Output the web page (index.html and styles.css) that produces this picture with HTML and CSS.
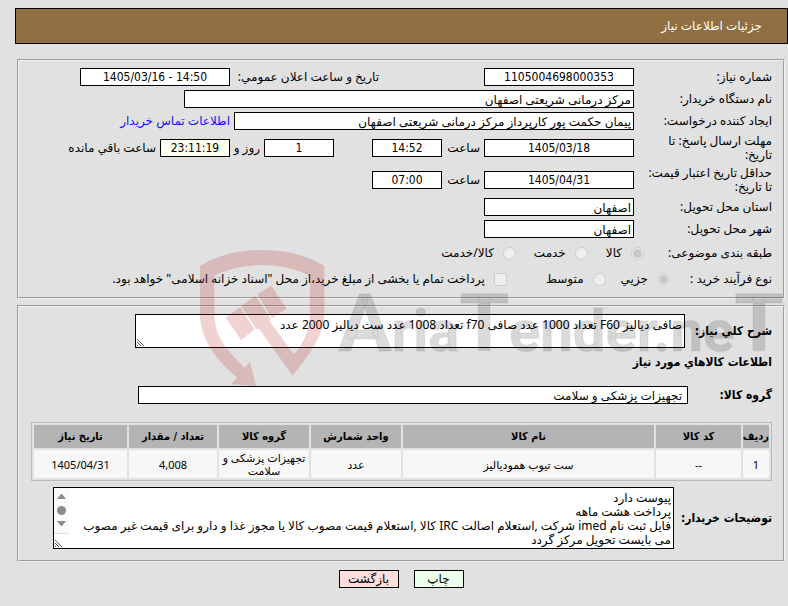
FILE: index.html
```html
<!DOCTYPE html>
<html lang="fa" dir="rtl">
<head>
    <meta charset="UTF-8">
    <meta name="viewport" content="width=device-width, initial-scale=1.0">
    <title>جزئیات اطلاعات نیاز</title>
    <link rel="stylesheet" href="styles.css">
</head>
<body>
    <header class="page-title">جزئیات اطلاعات نیاز</header>

    <main class="content">
        <form>
            <section class="panel details">
                <div class="row">
                    <label class="row-label" for="need-no">شماره نیاز:</label>
                    <input class="field medium center" id="need-no" type="text" value="1105004698000353" readonly>
                    <label class="announce-label" for="announce">تاریخ و ساعت اعلان عمومي:</label>
                    <input class="field medium center" id="announce" type="text" value="1405/03/16 - 14:50" dir="ltr" readonly>
                </div>
                <div class="row">
                    <label class="row-label" for="buyer">نام دستگاه خریدار:</label>
                    <input class="field wide" id="buyer" type="text" value="مرکز درمانی شریعتی اصفهان" readonly>
                </div>
                <div class="row">
                    <label class="row-label" for="creator">ایجاد کننده درخواست:</label>
                    <input class="field large" id="creator" type="text" value="پیمان حکمت پور کارپرداز مرکز درمانی شریعتی اصفهان" readonly>
                    <a class="contact" href="#">اطلاعات تماس خریدار</a>
                </div>
                <div class="row tall">
                    <label class="row-label" for="reply-date">مهلت ارسال پاسخ: تا<br>تاریخ:</label>
                    <input class="field medium center" id="reply-date" type="text" value="1405/03/18" readonly>
                    <label class="hour-label" for="reply-time">ساعت</label>
                    <input class="field small center" id="reply-time" type="text" value="14:52" readonly>
                    <input class="field small center days" id="days" type="text" value="1" readonly>
                    <label class="days-label" for="days">روز و</label>
                    <input class="field small center countdown" id="left" type="text" value="23:11:19" readonly>
                    <label class="left-label" for="left">ساعت باقي مانده</label>
                </div>
                <div class="row tall">
                    <label class="row-label" for="valid-date">حداقل تاریخ اعتبار قیمت:<br>تا تاریخ:</label>
                    <input class="field medium center" id="valid-date" type="text" value="1405/04/31" readonly>
                    <label class="hour-label" for="valid-time">ساعت</label>
                    <input class="field small center" id="valid-time" type="text" value="07:00" readonly>
                </div>
                <div class="row">
                    <label class="row-label" for="province">استان محل تحویل:</label>
                    <input class="field medium" id="province" type="text" value="اصفهان" readonly>
                </div>
                <div class="row">
                    <label class="row-label" for="city">شهر محل تحویل:</label>
                    <input class="field medium" id="city" type="text" value="اصفهان" readonly>
                </div>
                <div class="row options">
                    <span class="options-label">طبقه بندی موضوعی:</span>
                    <label class="option"><input type="radio" name="subject" checked disabled> کالا</label>
                    <label class="option"><input type="radio" name="subject" disabled> خدمت</label>
                    <label class="option"><input type="radio" name="subject" disabled> کالا/خدمت</label>
                </div>
                <div class="row options process">
                    <span class="options-label">نوع فرآیند خرید :</span>
                    <label class="option"><input type="radio" name="process" checked disabled> جزیي</label>
                    <label class="option"><input type="radio" name="process" disabled> متوسط</label>
                    <label class="option payment"><input type="checkbox" disabled> پرداخت تمام یا بخشی از مبلغ خرید،از محل "اسناد خزانه اسلامی" خواهد بود.</label>
                </div>
            </section>

            <section class="panel goods">
                <div class="text-row summary-row">
                    <label for="summary">شرح کلي نیاز:</label>
                    <div class="textarea-box">
                        <textarea class="summary" id="summary" readonly>صافی دیالیز F60 تعداد 1000 عدد صافی f70 تعداد 1008 عدد ست دیالیز 2000 عدد</textarea>
                        <svg class="grip" width="9" height="9" viewBox="0 0 9 9"><path d="M1 1l7 7M1 4l4 4M1 7l1 1"/></svg>
                    </div>
                </div>
                <h2>اطلاعات کالاهاي مورد نیاز</h2>
                <div class="text-row group-row">
                    <label for="group">گروه کالا:</label>
                    <input class="field group" id="group" type="text" value="تجهیزات پزشکی و سلامت" readonly>
                </div>

                <table class="items">
                    <colgroup>
                        <col class="col-row">
                        <col class="col-code">
                        <col>
                        <col class="col-unit">
                        <col class="col-group">
                        <col class="col-count">
                        <col class="col-date">
                    </colgroup>
                    <thead>
                        <tr>
                            <th>ردیف</th>
                            <th>کد کالا</th>
                            <th>نام کالا</th>
                            <th>واحد شمارش</th>
                            <th>گروه کالا</th>
                            <th>تعداد / مقدار</th>
                            <th>تاریخ نیاز</th>
                        </tr>
                    </thead>
                    <tbody>
                        <tr>
                            <td>1</td>
                            <td>--</td>
                            <td>ست تیوب همودیالیز</td>
                            <td>عدد</td>
                            <td>تجهیزات پزشکی و سلامت</td>
                            <td>4,008</td>
                            <td>1405/04/31</td>
                        </tr>
                    </tbody>
                </table>

                <div class="text-row notes-row">
                    <label for="notes">توضیحات خریدار:</label>
                    <div class="textarea-box">
                        <textarea class="notes" id="notes" readonly>پیوست دارد
پرداخت هشت ماهه
فایل ثبت نام imed شرکت ,استعلام اصالت IRC کالا ,استعلام قیمت مصوب کالا یا مجوز غذا و دارو برای قیمت غیر مصوب می بایست تحویل مرکز گردد</textarea>
                        <svg class="scroller" width="15" height="46" viewBox="0 0 15 46">
                            <rect width="15" height="46" fill="#fafafa"/>
                            <path d="M3 11l4-5h1l4 5zM3 33l4 5h1l4-5z" fill="#8b8b8b"/>
                            <circle cx="7.500" cy="22.500" r="4.500" fill="#8b8b8b"/>
                            <path d="M0 45.500h15" stroke="#dcdcdc"/>
                        </svg>
                        <svg class="grip" width="9" height="9" viewBox="0 0 9 9"><path d="M1 1l7 7M1 4l4 4M1 7l1 1"/></svg>
                    </div>
                </div>
            </section>

            <div class="actions">
                <button class="print" type="button">چاپ</button>
                <button class="back" type="button">بازگشت</button>
            </div>
        </form>
    </main>

    <svg class="watermark" width="588" height="140" viewBox="0 0 588 140" direction="ltr" aria-hidden="true">
        <g class="shield" transform="translate(-10 -10) scale(.3333)">
            <path d="M30 77Q110 30 215 30Q325 30 403 77V215C403 295 350 350 308 407L207 266L199 268L153 198L196 167L242 236L238 243L312 343C340 310 360 270 360 215V107Q295 75 215 75Q138 75 73 107V220C73 290 110 330 164 383L180 366L198 438L122 433L142 413C80 360 30 300 30 220Z"/>
            <path d="M107 233L150 202L194 268L154 300Z"/>
            <path d="M202 163L244 137L290 206L246 235Z"/>
        </g>
        <text class="wordmark" x="138" y="101"><tspan class="cap">A</tspan>ria<tspan class="cap">T</tspan>ender.ne<tspan class="cap">T</tspan></text>
    </svg>
</body>
</html>
```
FILE: styles.css
```css
* {
    box-sizing: border-box;
}

body {
    position: relative;
    margin: 0;
    padding: 8px 0 0;
    background: #e1e1e1;
    color: #000;
    font-family: "Noto Sans", "DejaVu Sans", sans-serif;
    font-size: 12px;
    line-height: 14px;
}

input,
textarea,
button {
    margin: 0;
    font: inherit;
    color: inherit;
}

.page-title {
    margin-left: 15px;
    padding: 10px 25px 10px 0;
    border: 1px solid #000;
    background: #906f42;
    color: #fff;
}

.content {
    padding: 15px 3px 16px 17px;
}

.panel {
    border: 2px groove #f0f0f0;
    padding: 5px 11px;
}

.goods {
    margin-top: 6px;
    padding-top: 7px;
    padding-bottom: 11px;
}

/* need details */
.row {
    display: flex;
    align-items: center;
    height: 22px;
    white-space: nowrap;
}

.row.tall {
    height: 32px;
}

.row-label {
    flex: none;
    width: 138px;
}

.field {
    height: 18px;
    border: 1px solid #000;
    padding: 0 2px;
    background: #fff;
    outline: none;
}

.center {
    font-family: "DejaVu Sans Condensed", "DejaVu Sans", sans-serif;
    text-align: center;
}

.small {
    width: 70px;
}

.medium {
    width: 150px;
}

.large {
    width: 400px;
}

.wide {
    width: 450px;
}

.announce-label {
    width: 149px;
    margin-right: 105px;
}

.contact {
    margin-right: 4px;
    color: #1a0dff;
    text-decoration: none;
}

.hour-label {
    width: 42px;
    padding-right: 4px;
}

.days {
    margin-right: 38px;
}

.days-label {
    width: 34px;
    padding-right: 4px;
}

.countdown {
    background: #fffff0;
}

.left-label {
    padding-right: 4px;
}

.row.options {
    height: 26px;
}

.options-label {
    width: 128px;
}

.process .options-label {
    width: 102px;
}

.option {
    display: flex;
    align-items: center;
    gap: 9px;
    margin-left: 18px;
}

.process .option {
    margin-left: 15px;
}

.process .payment {
    margin-right: 24px;
    margin-left: 0;
}

.option input {
    appearance: none;
    width: 13px;
    height: 13px;
    border: 1px solid #cdcdcd;
    background: #eee;
}

.option input[type="radio"] {
    border-radius: 50%;
}

.option input[type="checkbox"] {
    border-radius: 2px;
}

.option input:checked {
    background: radial-gradient(circle, #c8c8c8 4px, #eee 5px);
}

/* requested goods */
.text-row {
    display: flex;
    align-items: center;
}

.text-row label,
h2,
.items th {
    font-family: "DejaVu Sans Condensed", "DejaVu Sans", sans-serif;
    font-weight: bold;
}

.text-row label {
    flex: none;
    white-space: nowrap;
}

.textarea-box {
    position: relative;
    flex: 1;
}

.summary-row label {
    width: 87px;
}

.summary-row .textarea-box {
    max-width: 550px;
}

textarea {
    display: block;
    width: 100%;
    border: 1px solid #000;
    padding: 3px 2px;
    background: #fff;
    resize: none;
    overflow: hidden;
    outline: none;
}

.summary {
    height: 34px;
}

.grip {
    position: absolute;
    bottom: 1px;
    left: 1px;
    fill: none;
    stroke: #555;
}

.scroller {
    position: absolute;
    top: 1px;
    left: 1px;
}

h2 {
    margin: 7px 0 17px;
    font-size: 12px;
    line-height: 14px;
}

.group-row label {
    width: 84px;
}

.group {
    flex: 1;
    max-width: 550px;
    padding-right: 5px;
}

.items {
    width: calc(100% - 1px);
    margin: 18px 0 6px;
    border: 1px solid #bbb;
    border-spacing: 2px;
    table-layout: fixed;
    font-size: 11px;
    line-height: 13px;
    text-align: center;
}

.items th {
    height: 23px;
    padding: 0;
    background: #b4b4b4;
}

.items td {
    height: 28px;
    padding: 0 2px;
    background: #f7f7f7;
}

.col-row {
    width: 26px;
}

.col-code {
    width: 85px;
}

.col-unit,
.col-group {
    width: 90px;
}

.col-count {
    width: 88px;
}

.col-date {
    width: 93px;
}

.notes-row {
    padding-left: 23px;
}

.notes-row label {
    width: 98px;
}

.notes {
    height: 62px;
    padding-left: 18px;
}

.actions {
    display: flex;
    justify-content: center;
    gap: 15px;
    margin-top: 8px;
}

.actions button {
    height: 18px;
    border: 1px solid #000;
    padding: 0;
}

.print {
    width: 50px;
    background: #ebffeb;
}

.back {
    width: 60px;
    background: #fdd;
}

/* logo laid over the sheet */
.watermark {
    position: absolute;
    top: 250px;
    left: 200px;
    pointer-events: none;
}

.shield {
    fill: rgba(180, 30, 35, .2);
}

.wordmark {
    fill: rgba(0, 0, 0, .14);
    stroke: rgba(0, 0, 0, .04);
    stroke-width: 2px;
    font-family: Roboto, "Liberation Sans", sans-serif;
    font-size: 58px;
    font-weight: bold;
}

.cap {
    font-size: 80px;
}
```
